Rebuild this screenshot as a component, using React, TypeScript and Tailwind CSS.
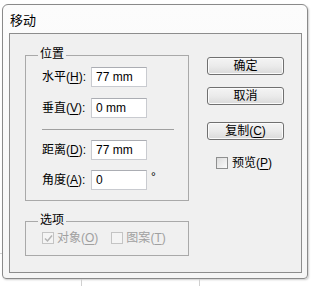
import React from "react";

const font = { fontFamily: '"Liberation Sans", "Noto Sans CJK SC", sans-serif' };

const Mn = ({ k }: { k: string }) => (
    <span>
        (<span className="underline underline-offset-2">{k}</span>)
    </span>
);

const Field = ({ label, k, value, unit }: { label: string; k: string; value: string; unit?: string }) => (
    <div className="flex items-center h-[20px]">
        <div className="w-[49px] whitespace-nowrap leading-none">
            {label}
            <Mn k={k} />:
        </div>
        <div className="w-[56px] h-[20px] border border-[#c9cbd0] border-t-[#abadb3] bg-white pl-[4px] flex items-center leading-none">
            {value}
        </div>
        {unit && <span className="ml-[4px] -mt-[6px] text-[12px] leading-none">{unit}</span>}
    </div>
);

const Button = ({ children }: { children: React.ReactNode }) => (
    <div className="w-[77px] h-[18px] rounded-[3px] border border-[#707070] bg-gradient-to-b from-[#f4f4f4] via-[#ebebeb] to-[#dadada] shadow-[inset_0_0_0_1px_#fbfbfb] flex items-center justify-center leading-none">
        {children}
    </div>
);

const Check = ({ checked, disabled }: { checked?: boolean; disabled?: boolean }) => (
    <div
        className={`w-[12px] h-[12px] border shrink-0 flex items-center justify-center ${
            disabled ? "border-[#c4c4c4] bg-[#f4f4f4]" : "border-[#8e8f8f] bg-gradient-to-br from-[#dcdcdc] to-[#fbfbfb]"
        }`}
    >
        {checked && (
            <svg width="9" height="9" viewBox="0 0 9 9">
                <path d="M1 4.5 L3.5 7 L8 1.5" fill="none" stroke="#b3b3b3" strokeWidth="1.5" />
            </svg>
        )}
    </div>
);

const GroupBox = ({ title, className, children }: { title: string; className: string; children: React.ReactNode }) => (
    <div className={`relative border border-[#a9a9a9] ${className}`}>
        <span className="absolute -top-[8px] left-[12px] px-[2px] bg-[#f0f0f0] leading-none text-[12px] text-black">
            {title}
        </span>
        {children}
    </div>
);

export default function App() {
    return (
        <div className="relative w-[311px] h-[286px] bg-white overflow-hidden text-[12px] text-black" style={font}>
            <div className="absolute left-[81px] top-[279px] w-px h-[8px] bg-[#d0d0d0]" />
            <div className="absolute left-[199px] top-[279px] w-px h-[8px] bg-[#d0d0d0]" />
            <div className="absolute left-0 top-[253px] w-[2px] h-px bg-[#d0d0d0]" />

            <div className="ml-[2px] mt-[4px] w-[306px] h-[275px] rounded-t-[6px] rounded-b-[4px] border border-[#8a8a8a] bg-gradient-to-b from-[#fcfcfc] to-[#f6f6f6] shadow-[1px_1px_2px_rgba(0,0,0,0.2)] flex flex-col">
                <div className="h-[28px] pl-[7px] pt-[9px] text-[13px] leading-none">移动</div>
                <div className="ml-[6px] w-[293px] h-[240px] border border-[#8d8d8d] bg-[#f0f0f0] flex pl-[15px] pt-[21px]">
                    <div className="flex flex-col w-[164px]">
                        <GroupBox title="位置" className="h-[146px] pl-[16px] pt-[11px] flex flex-col">
                            <Field label="水平" k="H" value="77 mm" />
                            <div className="h-[11px]" />
                            <Field label="垂直" k="V" value="0 mm" />
                            <div className="h-[11px]" />
                            <div className="w-[132px] h-px bg-[#a0a0a0]" />
                            <div className="h-[10px]" />
                            <Field label="距离" k="D" value="77 mm" />
                            <div className="h-[10px]" />
                            <Field label="角度" k="A" value="0" unit="°" />
                        </GroupBox>
                        <GroupBox title="选项" className="mt-[20px] h-[35px] pl-[16px] pt-[10px] flex text-[#a0a0a0]">
                            <div className="flex items-center gap-[3px] h-[12px] leading-none">
                                <Check checked disabled />
                                <span>
                                    对象<Mn k="O" />
                                </span>
                            </div>
                            <div className="flex items-center gap-[3px] h-[12px] ml-[13px] leading-none">
                                <Check disabled />
                                <span>
                                    图案<Mn k="T" />
                                </span>
                            </div>
                        </GroupBox>
                    </div>
                    <div className="ml-[18px] pt-[2px] flex flex-col">
                        <Button>确定</Button>
                        <div className="h-[12px]" />
                        <Button>取消</Button>
                        <div className="h-[17px]" />
                        <Button>
                            复制<Mn k="C" />
                        </Button>
                        <div className="h-[17px]" />
                        <div className="ml-[9px] flex items-center gap-[4px] h-[12px] leading-none">
                            <Check />
                            <span>
                                预览<Mn k="P" />
                            </span>
                        </div>
                    </div>
                </div>
            </div>
        </div>
    );
}
